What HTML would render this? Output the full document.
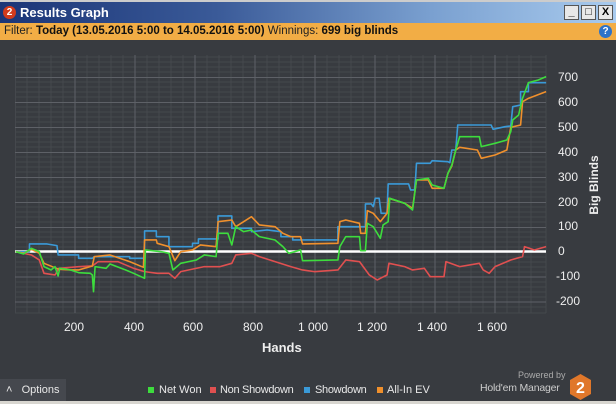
<!DOCTYPE html>
<html><head><style>
body{margin:0;width:616px;height:404px;overflow:hidden;background:#383b40;font-family:"Liberation Sans",sans-serif;position:relative}
.tb{position:absolute;left:0;top:2px;width:616px;height:21px;background:linear-gradient(90deg,#1b3577 0%,#3a5a98 35%,#7aa0d0 70%,#a9cbee 100%)}
.tb .t{position:absolute;left:20px;top:3px;color:#fff;font-weight:bold;font-size:13px}
.ic{position:absolute;left:3px;top:4px;width:13px;height:13px;border-radius:50%;background:#d33b1c;color:#fff;font-size:10px;font-weight:bold;text-align:center;line-height:13px}
.btn{position:absolute;top:3px;width:15px;height:15px;background:#e8e8e8;border:1px solid #555;box-sizing:border-box;font-size:11px;text-align:center;line-height:13px;font-weight:bold}
.fb{position:absolute;left:0;top:23px;width:616px;height:17px;background:#f2ad45;font-size:11.5px;line-height:17px;padding-left:4px;box-sizing:border-box;color:#222}
.fb b{color:#111}
.q{position:absolute;right:4px;top:2px;width:13px;height:13px;border-radius:50%;background:#2e73c8;color:#fff;font-size:10px;font-weight:bold;text-align:center;line-height:13px}
.lbl{position:absolute;color:#eee;font-size:12px}
.opt{position:absolute;left:0;top:379px;width:66px;height:22px;background:#45484e;color:#e8e8e8;font-size:11px;line-height:22px;padding-left:6px;box-sizing:border-box}
.foot{position:absolute;left:0;top:401px;width:616px;height:3px;background:#d8d6d0}
.lg{position:absolute;top:384px;font-size:11px;color:#e8e8e8;white-space:nowrap}
.sq{position:absolute;top:387px;width:6px;height:6px}
</style></head><body>
<div style="position:absolute;left:0;top:0;width:616px;height:2px;background:#ccc"></div>
<div class="tb"><div class="ic">2</div><div class="t">Results Graph</div>
<div class="btn" style="left:564px">_</div><div class="btn" style="left:581px">□</div><div class="btn" style="left:598px">X</div></div>
<div class="fb">Filter: <b>Today (13.05.2016 5:00 to 14.05.2016 5:00)</b> Winnings: <b>699 big blinds</b><div class="q">?</div></div>
<svg style="position:absolute;left:0;top:0" width="616" height="404">
<g stroke="#45484d" stroke-width="1">
<path d="M15.5 55v258M27 55v258M39 55v258M51 55v258M63 55v258M87 55v258M99 55v258M111 55v258M123 55v258M147 55v258M159 55v258M171 55v258M183 55v258M207 55v258M219 55v258M231 55v258M243 55v258M267 55v258M279 55v258M291 55v258M303 55v258M327 55v258M339 55v258M351 55v258M363 55v258M387 55v258M399 55v258M411 55v258M423 55v258M447 55v258M459 55v258M471 55v258M483 55v258M507 55v258M519 55v258M531 55v258M546 55v258"/>
<path d="M15 57h531M15 62h531M15 67h531M15 72h531M15 82h531M15 87h531M15 92h531M15 97h531M15 107h531M15 112h531M15 117h531M15 122h531M15 132h531M15 137h531M15 142h531M15 147h531M15 157h531M15 162h531M15 167h531M15 172h531M15 182h531M15 187h531M15 192h531M15 197h531M15 207h531M15 212h531M15 217h531M15 222h531M15 232h531M15 237h531M15 242h531M15 247h531M15 257h531M15 262h531M15 267h531M15 272h531M15 282h531M15 287h531M15 292h531M15 297h531M15 307h531M15 313h531"/>
</g>
<g stroke="#5e6167" stroke-width="1">
<path d="M75 55v258M135 55v258M195 55v258M255 55v258M315 55v258M375 55v258M435 55v258M495 55v258"/>
<path d="M15 77.5h531M15 102.5h531M15 127.5h531M15 152.5h531M15 177.5h531M15 202.5h531M15 227.5h531M15 277h531M15 302h531"/>
</g>
<line x1="15" y1="251.5" x2="546" y2="251.5" stroke="#fff" stroke-width="2.5"/>
<g transform="translate(0,40) scale(0.3929,0.3333)" fill="none" stroke-width="1.6" stroke-linejoin="round">
<polyline vector-effect="non-scaling-stroke" stroke="#3a9ad8" points="40,635 75,635 75,612 120,612 145,617 148,645 200,645 200,655 235,655 240,650 330,650 330,655 368,655 368,573 398,573 398,590 430,590 430,620 490,620 490,610 505,610 505,597 555,597 555,528 590,528 590,565 640,565 640,575 680,570 715,575 715,590 745,590 745,600 860,600 860,560 930,560 930,492 945,492 950,500 955,475 965,475 970,520 985,520 988,432 1040,432 1045,450 1055,450 1058,410 1060,370 1095,370 1100,362 1140,365 1145,368 1150,330 1160,330 1165,255 1250,255 1255,268 1285,260 1300,258 1305,200 1325,195 1325,155 1345,155 1345,128 1390,128"/>
<polyline vector-effect="non-scaling-stroke" stroke="#e05050" points="40,635 80,645 100,660 112,700 140,705 150,685 200,680 235,678 250,665 300,665 340,685 368,695 400,700 430,700 445,715 460,695 520,680 560,680 590,670 600,645 640,640 660,650 700,665 740,680 770,690 800,695 860,690 880,660 915,665 940,705 960,720 985,705 990,670 1030,680 1050,690 1080,685 1095,710 1130,710 1135,665 1170,680 1220,670 1230,690 1245,700 1260,680 1300,660 1330,650 1335,620 1360,630 1390,620"/>
<polyline vector-effect="non-scaling-stroke" stroke="#f0902c" points="40,635 60,640 80,628 100,640 112,670 150,688 180,690 200,690 235,678 240,650 280,645 330,665 365,682 368,600 398,600 400,610 430,620 445,662 460,635 490,630 510,615 550,620 555,545 590,540 600,560 620,545 640,530 660,555 700,560 720,580 740,590 765,590 770,612 860,610 865,545 880,540 915,550 918,580 930,580 935,512 950,520 968,545 985,520 990,475 1030,490 1050,505 1060,420 1090,420 1100,445 1130,445 1140,400 1150,378 1160,330 1170,322 1215,330 1225,355 1260,345 1290,330 1300,262 1325,255 1330,185 1345,175 1390,155"/>
<polyline vector-effect="non-scaling-stroke" stroke="#3ddc3d" points="40,635 60,642 80,625 100,635 112,680 130,690 140,680 148,708 152,685 180,690 200,698 230,700 235,705 238,755 242,680 270,685 280,672 320,690 340,700 368,715 370,630 410,635 430,640 440,690 460,670 500,660 520,645 550,650 555,580 580,580 590,615 600,560 620,575 640,570 660,590 700,600 720,620 735,640 765,630 770,662 860,660 865,620 880,590 915,590 918,632 930,632 935,550 950,560 968,595 975,555 988,545 992,475 1030,490 1050,510 1060,420 1090,415 1100,435 1130,445 1140,400 1150,375 1160,330 1170,290 1220,290 1225,320 1260,310 1290,300 1300,275 1305,240 1320,225 1330,175 1345,128 1370,120 1390,110"/>
</g>
<text x="598" y="185" transform="rotate(-90 598 185)" fill="#eee" font-family="Liberation Sans" font-weight="bold" font-size="12" text-anchor="middle">Big Blinds</text>
</svg>
<div class="lbl" style="left:558px;top:70px">700</div>
<div class="lbl" style="left:558px;top:95px">600</div>
<div class="lbl" style="left:558px;top:120px">500</div>
<div class="lbl" style="left:558px;top:145px">400</div>
<div class="lbl" style="left:558px;top:170px">300</div>
<div class="lbl" style="left:558px;top:195px">200</div>
<div class="lbl" style="left:558px;top:219px">100</div>
<div class="lbl" style="left:558px;top:244px">0</div>
<div class="lbl" style="left:556px;top:269px">-100</div>
<div class="lbl" style="left:556px;top:294px">-200</div>
<div class="lbl" style="left:64px;top:320px">200</div>
<div class="lbl" style="left:124px;top:320px">400</div>
<div class="lbl" style="left:183px;top:320px">600</div>
<div class="lbl" style="left:243px;top:320px">800</div>
<div class="lbl" style="left:298px;top:320px">1 000</div>
<div class="lbl" style="left:357px;top:320px">1 200</div>
<div class="lbl" style="left:417px;top:320px">1 400</div>
<div class="lbl" style="left:477px;top:320px">1 600</div>
<div class="lbl" style="left:262px;top:340px;font-weight:bold;font-size:13px">Hands</div>
<div class="opt">˄&nbsp;&nbsp; Options</div>
<div class="sq" style="left:148px;background:#3ddc3d"></div><div class="lg" style="left:159px">Net Won</div>
<div class="sq" style="left:210px;background:#e05050"></div><div class="lg" style="left:220px;letter-spacing:-0.3px">Non Showdown</div>
<div class="sq" style="left:304px;background:#3a9ad8"></div><div class="lg" style="left:315px;letter-spacing:-0.3px">Showdown</div>
<div class="sq" style="left:377px;background:#f0902c"></div><div class="lg" style="left:387px">All-In EV</div>
<div style="position:absolute;left:518px;top:370px;color:#aaa;font-size:9px">Powered by</div>
<div style="position:absolute;left:480px;top:382px;color:#ccc;font-size:10.5px;letter-spacing:-0.2px">Hold'em Manager</div>
<svg style="position:absolute;left:569px;top:373px" width="23" height="28"><polygon points="11.5,1 22,7 22,21 11.5,27 1,21 1,7" fill="#e0772a"/><text x="11.5" y="20" fill="#fff" font-family="Liberation Sans" font-weight="bold" font-size="16" text-anchor="middle">2</text></svg>
<div class="foot"></div>
</body></html>
